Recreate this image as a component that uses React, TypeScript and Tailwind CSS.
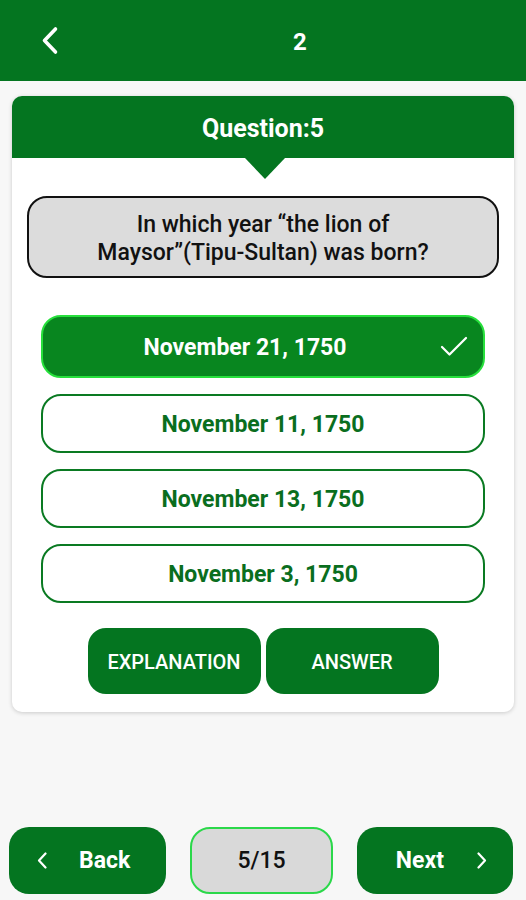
import { Check } from "lucide-react";

const options = [
  { label: "November 21, 1750", selected: true },
  { label: "November 11, 1750", selected: false },
  { label: "November 13, 1750", selected: false },
  { label: "November 3, 1750", selected: false },
];

function Chevron({ dir, className }: { dir: "left" | "right"; className?: string }) {
  return (
    <svg width="12" height="17" viewBox="0 0 12 17" className={className}>
      <path
        d={dir === "left" ? "M9.5 1.5 L3 8.5 L9.5 15.5" : "M2.5 1.5 L9 8.5 L2.5 15.5"}
        fill="none"
        stroke="currentColor"
        strokeWidth="2.2"
        strokeLinecap="round"
        strokeLinejoin="round"
      />
    </svg>
  );
}

export default function App() {
  return (
    <div className="flex h-[900px] w-full flex-col bg-[#f7f7f7] font-['Roboto',sans-serif]">
      {/* Top bar */}
      <div className="flex h-[81px] items-center bg-[#047520]">
        <div className="flex w-[74px] items-center pl-[40px] text-white">
          <svg width="19" height="29" viewBox="0 0 19 29">
            <path
              d="M15.5 3 L4.5 14.5 L15.5 26"
              fill="none"
              stroke="currentColor"
              strokeWidth="3.6"
              strokeLinecap="round"
              strokeLinejoin="round"
            />
          </svg>
        </div>
        <div className="flex-1 pt-[2px] text-center text-[24px] font-bold text-white">2</div>
      </div>

      {/* Question card */}
      <div className="mx-[12px] mt-[15px] overflow-hidden rounded-[10px] bg-white pb-[18px] shadow-[0_1px_4px_rgba(0,0,0,0.18)]">
        <div className="flex h-[62px] items-center justify-center bg-[#047520] pt-[4px]">
          <h2 className="text-[25px] font-bold text-white">Question:5</h2>
        </div>
        <div className="flex justify-center pl-[4px]">
          <svg width="40" height="21" viewBox="0 0 40 21">
            <path d="M0 0 L40 0 L20 21 Z" fill="#047520" />
          </svg>
        </div>

        <div className="mx-[15px] mt-[17px] flex h-[82px] items-center justify-center rounded-[20px] border-2 border-[#111] bg-[#dcdcdc] px-3 pt-[3px]">
          <p className="text-center text-[23px] font-medium leading-[28px] text-[#111]">
            In which year “the lion of
            <br />
            Maysor”(Tipu-Sultan) was born?
          </p>
        </div>

        {/* Options */}
        <div className="mx-[29px] mt-[37px] flex flex-col gap-[16px]">
          {options.map((opt) =>
            opt.selected ? (
              <div
                key={opt.label}
                className="relative flex h-[63px] items-center justify-center rounded-[20px] border-2 border-[#27e03c] bg-[#08861f] pt-[3px] pr-[36px]"
              >
                <span className="text-[23px] font-bold text-white">{opt.label}</span>
                <Check className="absolute top-[12px] right-[11px] text-white" size={36} strokeWidth={1.5} />
              </div>
            ) : (
              <div
                key={opt.label}
                className="flex h-[59px] items-center justify-center rounded-[20px] border-2 border-[#0a7a22] bg-white pt-[4px]"
              >
                <span className="text-[23px] font-bold text-[#0a6e1e]">{opt.label}</span>
              </div>
            )
          )}
        </div>

        {/* Actions */}
        <div className="mt-[25px] flex justify-center gap-[5px]">
          <button className="h-[66px] w-[173px] rounded-[18px] bg-[#047520] pt-[2px] text-[20px] font-medium text-white">
            EXPLANATION
          </button>
          <button className="h-[66px] w-[173px] rounded-[18px] bg-[#047520] pt-[2px] text-[20px] font-medium text-white">
            ANSWER
          </button>
        </div>
      </div>

      {/* Bottom nav */}
      <div className="mt-auto mb-[6px] flex items-center gap-[24px] pl-[9px]">
        <button className="flex h-[67px] w-[157px] items-center rounded-[20px] bg-[#047520] pl-[27px] text-white">
          <Chevron dir="left" />
          <span className="ml-[31px] pt-[2px] text-[23px] font-bold">Back</span>
        </button>
        <div className="flex h-[67px] w-[143px] items-center justify-center rounded-[20px] border-2 border-[#2bd84a] bg-[#d9d9d9] pt-[2px] text-[23px] font-medium text-[#111]">
          5/15
        </div>
        <button className="flex h-[67px] w-[156px] items-center justify-end rounded-[20px] bg-[#047520] pr-[25px] text-white">
          <span className="mr-[32px] pt-[2px] text-[23px] font-bold">Next</span>
          <Chevron dir="right" />
        </button>
      </div>
    </div>
  );
}
